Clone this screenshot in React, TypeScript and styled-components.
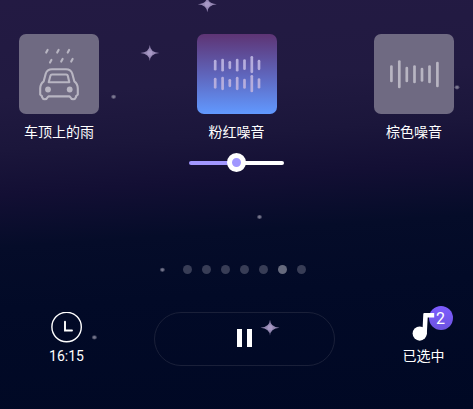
import styled, { createGlobalStyle } from "styled-components";

const GlobalStyle = createGlobalStyle`
  * {
    box-sizing: border-box;
  }
  body {
    margin: 0;
    background: #000925;
  }
`;

const Screen = styled.main`
  position: relative;
  display: flex;
  flex-direction: column;
  width: 473px;
  height: 409px;
  padding-top: 34px;
  overflow: hidden;
  color: #fff;
  font-family: Roboto, "Noto Sans CJK SC", sans-serif;
  background: linear-gradient(
    176deg,
    #231a43 0%,
    #211a41 22%,
    #1b163b 34%,
    #130f34 44%,
    #050c29 56%,
    #020a27 70%,
    #000824 100%
  );
`;

const Sky = styled.svg`
  position: absolute;
  inset: 0;
  pointer-events: none;
`;

const SoundRow = styled.section`
  display: flex;
  justify-content: space-between;
  height: 112px;
  padding: 0 19px;
`;

const SoundCard = styled.div`
  display: flex;
  flex-direction: column;
  align-items: center;
  width: 80px;
`;

const Tile = styled.div<{ $active?: boolean }>`
  width: 80px;
  height: 80px;
  border-radius: 7px;
  background: ${({ $active }) =>
    $active ? "linear-gradient(#5e3474, #5f66bd 52%, #6199ff)" : "#6f6a82"};

  svg {
    display: block;
  }
`;

const Label = styled.span`
  font-size: 14px;
  line-height: 20px;
  white-space: nowrap;
`;

const SoundLabel = styled(Label)`
  margin-top: 8px;
`;

const Slider = styled.div`
  display: flex;
  align-items: center;
  align-self: center;
  width: 95px;
  height: 19px;
  margin-top: 7px;
`;

const Track = styled.div<{ $filled?: boolean }>`
  flex: 1;
  height: 4px;
  border-radius: ${({ $filled }) => ($filled ? "2px 0 0 2px" : "0 2px 2px 0")};
  background: ${({ $filled }) => ($filled ? "#a197ff" : "#fff")};
`;

const Thumb = styled.div`
  width: 19px;
  height: 19px;
  margin: 0 -1px;
  border: 5px solid #fff;
  border-radius: 50%;
  background: #a197ff;
`;

const Pager = styled.div`
  display: flex;
  gap: 9.6px;
  margin: 92.5px 0 0 182.8px;
`;

const PageDot = styled.i<{ $current: boolean }>`
  width: 9.4px;
  height: 9.4px;
  border-radius: 50%;
  background: ${({ $current }) => ($current ? "#666a7d" : "#383d56")};
`;

const Controls = styled.footer`
  display: flex;
  align-items: flex-start;
  justify-content: space-between;
  margin-top: 38.1px;
  padding: 0 17px 0 34px;
`;

const Control = styled.div`
  display: flex;
  flex-direction: column;
  align-items: center;
  width: 65px;

  svg {
    display: block;
  }
`;

const ControlIcon = styled.div`
  position: relative;
  height: 34px;
`;

const Badge = styled.span`
  position: absolute;
  top: -6px;
  left: 21px;
  width: 24px;
  height: 24px;
  border-radius: 50%;
  background: linear-gradient(#7d5cff, #6c53df);
`;

const BadgeCount = styled.span`
  position: absolute;
  top: -6px;
  left: 21px;
  width: 24px;
  font-size: 16px;
  line-height: 25px;
  text-align: center;
`;

const NoteIcon = styled.svg`
  position: relative;
`;

const PauseButton = styled.button`
  display: flex;
  align-items: center;
  justify-content: center;
  gap: 5px;
  width: 181px;
  height: 54px;
  margin-right: 1px;
  padding: 0;
  border: 1px solid #1a2039;
  border-radius: 27px;
  background: transparent;
`;

const PauseBar = styled.i`
  width: 5px;
  height: 18px;
  margin-bottom: 2px;
  background: #fff;
`;

const stars = [
  [207.3, 4.3],
  [149.8, 53],
  [270, 327.7],
];

const specks = [
  [113.6, 96.8],
  [457, 87.3],
  [259.5, 217],
  [162.4, 269.8],
  [94.4, 337.4],
];

// [x, top, bottom]
const pinkBars = [
  [18.2, 27.2, 35.2],
  [25.6, 26, 36.2],
  [32.8, 28.3, 33.8],
  [40.2, 26, 36.2],
  [47.5, 26.5, 34.7],
  [54.8, 23.3, 37.8],
  [62, 27.2, 34.8],
  [18.2, 45.2, 53.3],
  [25.6, 44.2, 54.8],
  [32.8, 46.3, 51.8],
  [40.2, 44.2, 54.8],
  [47.5, 46, 53.5],
  [54.8, 42.3, 57],
  [62, 45.5, 53.2],
];

const brownBars = [
  [17.4, 32.5, 47],
  [25.3, 27.5, 53],
  [32.8, 34, 47],
  [40.5, 32.5, 48],
  [48, 35, 46.5],
  [55.5, 32.5, 48],
  [63.4, 29, 52],
];

const drops = [
  [28, 17],
  [39, 17],
  [49.5, 17],
  [31.8, 27],
  [43, 26],
  [53, 26],
];

function NightSky() {
  return (
    <Sky width="473" height="409">
      {stars.map(([x, y]) => (
        <g key={x} transform={`translate(${x} ${y})`} fill="#aa9bc8">
          <path
            d="M0-8Q.3-.8 9.5 0Q.3 .8 0 8Q-.3 .8-9.5 0Q-.3-.8 0-8Z"
            opacity=".85"
          />
          <circle r="2.6" opacity=".85" />
        </g>
      ))}
      {specks.map(([x, y]) => (
        <g key={x} fill="#a5a3b6">
          <ellipse cx={x} cy={y} rx="2.5" ry="2.1" opacity=".4" />
          <circle cx={x} cy={y} r="1.4" opacity=".5" />
        </g>
      ))}
    </Sky>
  );
}

function BarsIcon({ bars, color }: { bars: number[][]; color: string }) {
  return (
    <svg width="80" height="80" stroke={color} strokeWidth="2.7" strokeLinecap="round">
      {bars.map(([x, top, bottom]) => (
        <path key={`${x}-${top}`} d={`M${x} ${top}V${bottom}`} />
      ))}
    </svg>
  );
}

function CarIcon() {
  return (
    <svg
      width="80"
      height="80"
      fill="none"
      stroke="#b8b5c2"
      strokeWidth="2.1"
      strokeLinecap="round"
      strokeLinejoin="round"
    >
      {drops.map(([x, y]) => (
        <path key={`${x}-${y}`} d={`M${x + 0.6} ${y - 1.1}L${x - 0.8} ${y + 1.6}`} />
      ))}
      <path d="M33 35.3H47C50.5 35.3 52.4 36.9 53.3 39.8L55.3 47.3C57.7 49 58.8 51.3 58.8 54.5V60.5L57 62.3V63.2C56 66 52.3 66 51.3 63.2L50.6 62.4H29.4L28.7 63.2C27.7 66 24 66 23 63.2V62.3L21.2 60.5V54.5C21.2 51.3 22.3 49 24.7 47.3L26.7 39.8C27.6 36.9 29.5 35.3 33 35.3Z" />
      <path d="M33 40.5H47.2Q48.5 40.5 48.8 41.8L50.3 48.3H29.7L31.4 41.8Q31.8 40.5 33 40.5Z" />
      <circle cx="29" cy="55.5" r="2.9" fill="#b8b5c2" stroke="none" />
      <circle cx="50.7" cy="55.5" r="2.9" fill="#b8b5c2" stroke="none" />
    </svg>
  );
}

export default function App() {
  return (
    <>
      <GlobalStyle />
      <Screen>
        <SoundRow>
          <SoundCard>
            <Tile>
              <CarIcon />
            </Tile>
            <SoundLabel>车顶上的雨</SoundLabel>
          </SoundCard>
          <SoundCard>
            <Tile $active>
              <BarsIcon bars={pinkBars} color="#b5addd" />
            </Tile>
            <SoundLabel>粉红噪音</SoundLabel>
          </SoundCard>
          <SoundCard>
            <Tile>
              <BarsIcon bars={brownBars} color="#b8b5c2" />
            </Tile>
            <SoundLabel>棕色噪音</SoundLabel>
          </SoundCard>
        </SoundRow>

        <Slider>
          <Track $filled />
          <Thumb />
          <Track />
        </Slider>

        <Pager>
          {Array.from({ length: 7 }, (_, i) => (
            <PageDot key={i} $current={i === 5} />
          ))}
        </Pager>

        <Controls>
          <Control>
            <ControlIcon>
              <svg width="32" height="32" fill="none" stroke="#fff">
                <circle cx="15.6" cy="15" r="14.7" strokeWidth="1.4" />
                <path d="M14 9.8V18.5H21" strokeWidth="1.9" strokeLinecap="round" />
              </svg>
            </ControlIcon>
            <Label>16:15</Label>
          </Control>

          <PauseButton aria-label="暂停">
            <PauseBar />
            <PauseBar />
          </PauseButton>

          <Control>
            <ControlIcon>
              <Badge />
              <NoteIcon width="32" height="32">
                <g fill="#fff">
                  <circle cx="11.7" cy="21.6" r="7.1" />
                  <path d="M15.3 2Q15.3 1 16.3 1H26.2V5.4H19.7L18.8 22.5H14.3Z" />
                </g>
              </NoteIcon>
              <BadgeCount>2</BadgeCount>
            </ControlIcon>
            <Label>已选中</Label>
          </Control>
        </Controls>

        <NightSky />
      </Screen>
    </>
  );
}
